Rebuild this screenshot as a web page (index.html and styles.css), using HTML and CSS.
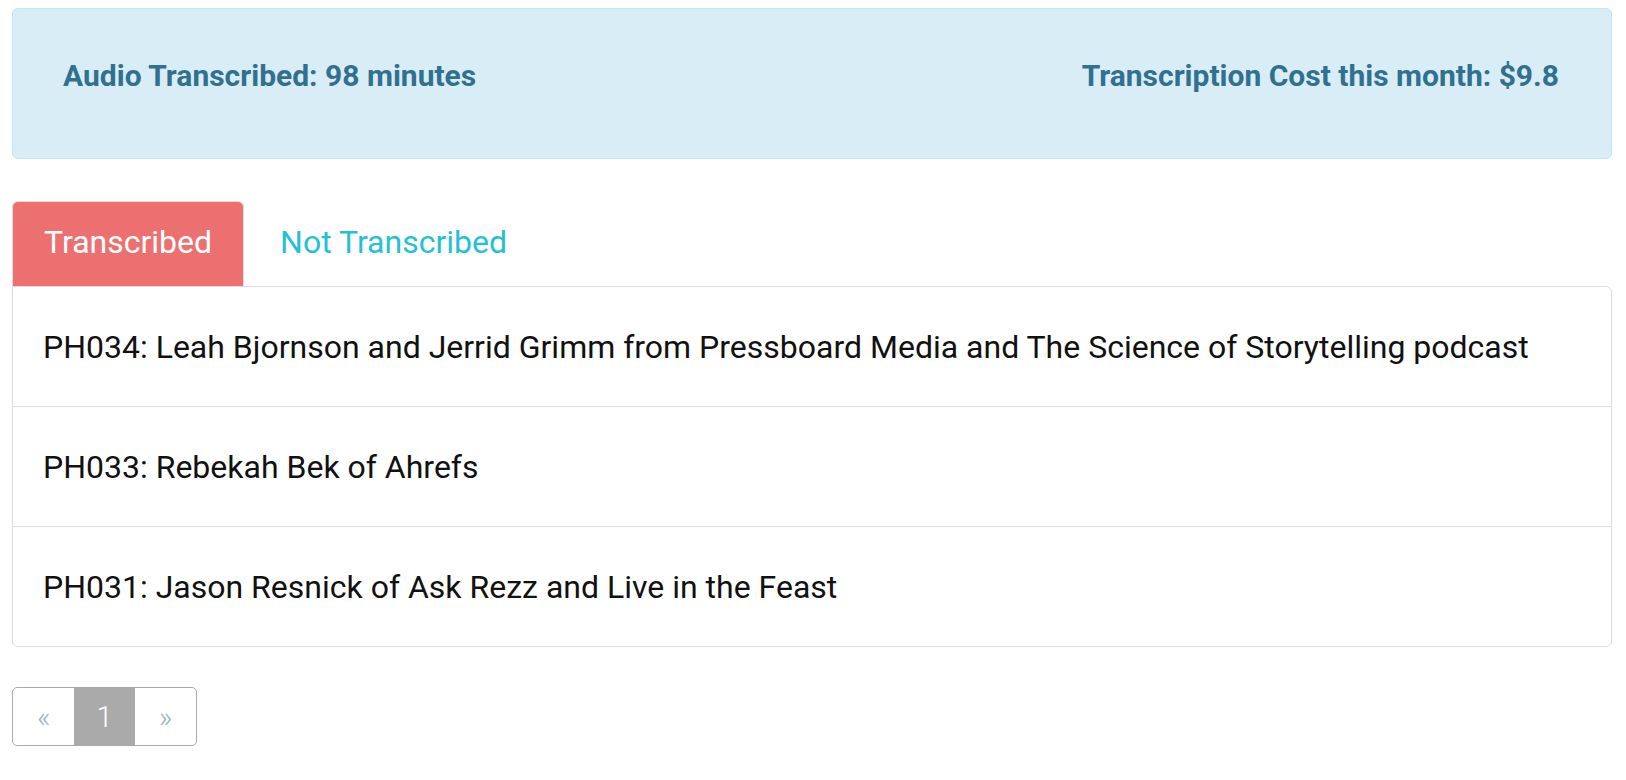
FILE: index.html
```html
<!DOCTYPE html>
<html>
<head>
<meta charset="utf-8">
<link rel="stylesheet" href="styles.css">
</head>
<body>
<div class="page">
  <div class="alert">
    <span class="stat">Audio Transcribed: 98 minutes</span>
    <span class="stat">Transcription Cost this month: $9.8</span>
  </div>
  <ul class="tabs">
    <li class="tab active">Transcribed</li>
    <li class="tab">Not Transcribed</li>
  </ul>
  <ul class="list">
    <li class="item">PH034: Leah Bjornson and Jerrid Grimm from Pressboard Media and The Science of Storytelling podcast</li>
    <li class="item">PH033: Rebekah Bek of Ahrefs</li>
    <li class="item">PH031: Jason Resnick of Ask Rezz and Live in the Feast</li>
  </ul>
  <ul class="pager">
    <li class="pg">&laquo;</li>
    <li class="pg current">1</li>
    <li class="pg">&raquo;</li>
  </ul>
</div>
</body>
</html>
```
FILE: styles.css
```css
* { box-sizing: border-box; }
html, body { margin: 0; padding: 0; background: #fff; }
body { font-family: Roboto, "Noto Sans", sans-serif; color: #111; }
.page { width: 1600px; margin: 8px 0 0 12px; }
.alert {
  display: flex;
  justify-content: space-between;
  align-items: flex-start;
  height: 151px;
  padding: 44px 52px 0 50px;
  background: #d9edf7;
  border: 1px solid #bce8f1;
  border-radius: 6px;
  color: #31708f;
}
.stat { font-size: 30px; font-weight: 700; line-height: 45px; }
.tabs {
  list-style: none;
  margin: 42px 0 0 0;
  padding: 0;
  display: flex;
  gap: 4px;
}
.tab {
  height: 85px;
  padding: 0 31px 4px;
  display: flex;
  align-items: center;
  font-size: 32px;
  color: #26c0d4;
  border: 1px solid transparent;
  border-bottom: none;
  border-radius: 6px 6px 0 0;
}
.tab.active {
  background: #ec7070;
  color: #fff;
  border-color: #dcdcdc;
}
.list {
  list-style: none;
  margin: 0;
  padding: 0;
  border: 1px solid #dcdcdc;
  border-radius: 0 6px 6px 6px;
}
.item {
  height: 120px;
  display: flex;
  align-items: center;
  padding: 0 30px;
  font-size: 32px;
  border-top: 1px solid #dcdcdc;
}
.item:first-child { border-top: none; height: 119px; }
.pager {
  list-style: none;
  margin: 40px 0 0 0;
  padding: 0;
  display: inline-flex;
  border: 1px solid #aaaaaa;
  border-radius: 5px;
  overflow: hidden;
}
.pg {
  width: 61px;
  height: 57px;
  display: flex;
  align-items: center;
  justify-content: center;
  font-size: 30px;
  color: #9fb4bf;
  font-weight: 300;
}
.pg.current { background: #aaaaaa; color: #fff; }
```
